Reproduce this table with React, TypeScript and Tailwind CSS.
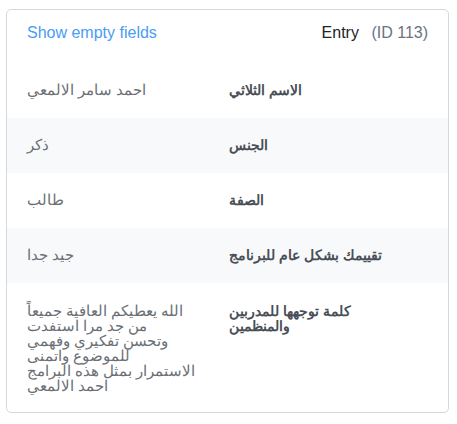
const rows: { label: string; value: string }[] = [
  { label: 'الاسم الثلاثي', value: 'احمد سامر الالمعي' },
  { label: 'الجنس', value: 'ذكر' },
  { label: 'الصفة', value: 'طالب' },
  { label: 'تقييمك بشكل عام للبرنامج', value: 'جيد جدا' },
]

const message = [
  'الله يعطيكم العافية جميعاً',
  'من جد مرا استفدت',
  'وتحسن تفكيري وفهمي',
  'للموضوع واتمنى',
  'الاستمرار بمثل هذه البرامج',
  'احمد الالمعي',
]

export default function App() {
  return (
    <div className="bg-white w-[457px] h-[424px] pt-[9px] pl-[6px] font-['Liberation_Sans',sans-serif]">
      <div className="w-[443px] h-[404px] border border-[#d5d8dd] rounded-[5px] overflow-hidden">
        {/* header */}
        <div className="flex items-center justify-between h-[44px] pl-[20px] pr-[20px] pt-[2px]">
          <span className="text-[16px] text-[#4a9cf5]">Show empty fields</span>
          <span className="text-[16px] text-[#1f2328]">
            Entry <span className="ml-[8px] text-[#6b7280]">(ID 113)</span>
          </span>
        </div>
        <div className="h-[9px]" />

        {rows.map((r, i) => (
          <div
            key={i}
            className={`flex items-center h-[55px] ${i % 2 === 1 ? 'bg-[#f8f9fb]' : 'bg-white'}`}
          >
            <div className="w-[222px] pl-[20px] text-[14.5px] text-[#6b6f76]">{r.value}</div>
            <div className="w-[200px] text-[14px] font-bold text-[#4a4f57]">{r.label}</div>
          </div>
        ))}

        {/* last row */}
        <div className="flex items-start pt-[21px]">
          <div className="w-[222px] pl-[20px] text-[14.5px] leading-[15px] text-[#6b6f76]">
            {message.map((line, i) => (
              <div key={i}>{line}</div>
            ))}
          </div>
          <div className="w-[170px] text-[14px] leading-[15px] font-bold text-[#4a4f57]">
            <div>كلمة توجهها للمدربين</div>
            <div>والمنظمين</div>
          </div>
        </div>
      </div>
    </div>
  )
}
